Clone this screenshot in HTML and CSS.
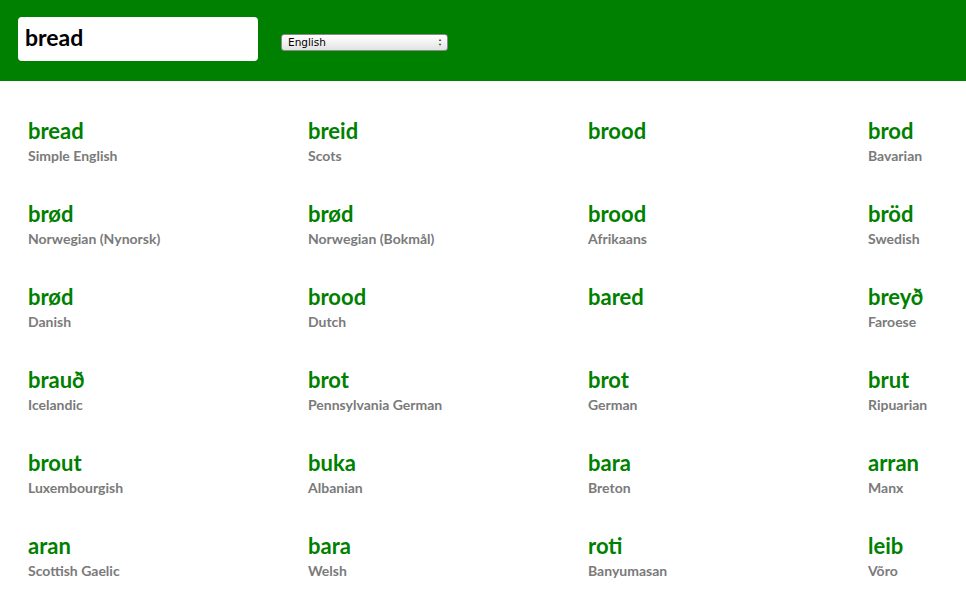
FILE: index.html
```html
<!DOCTYPE html>
<html>
<head>
<meta charset="utf-8">
<title>bread</title>
<link rel="stylesheet" href="styles.css">
</head>
<body>
<header class="topbar">
  <input class="search" type="text" value="bread">
  <div class="select-wrap">
    <select class="lang-select">
      <option>English</option>
    </select>
    <span class="arrows"><span>&#9650;</span><span>&#9660;</span></span>
  </div>
</header>
<main class="results">
  <div class="item"><div class="word">bread</div><div class="lang">Simple English</div></div>
  <div class="item"><div class="word">breid</div><div class="lang">Scots</div></div>
  <div class="item"><div class="word">brood</div><div class="lang"></div></div>
  <div class="item"><div class="word">brod</div><div class="lang">Bavarian</div></div>

  <div class="item"><div class="word">brød</div><div class="lang">Norwegian (Nynorsk)</div></div>
  <div class="item"><div class="word">brød</div><div class="lang">Norwegian (Bokmål)</div></div>
  <div class="item"><div class="word">brood</div><div class="lang">Afrikaans</div></div>
  <div class="item"><div class="word">bröd</div><div class="lang">Swedish</div></div>

  <div class="item"><div class="word">brød</div><div class="lang">Danish</div></div>
  <div class="item"><div class="word">brood</div><div class="lang">Dutch</div></div>
  <div class="item"><div class="word">bared</div><div class="lang"></div></div>
  <div class="item"><div class="word">breyð</div><div class="lang">Faroese</div></div>

  <div class="item"><div class="word">brauð</div><div class="lang">Icelandic</div></div>
  <div class="item"><div class="word">brot</div><div class="lang">Pennsylvania German</div></div>
  <div class="item"><div class="word">brot</div><div class="lang">German</div></div>
  <div class="item"><div class="word">brut</div><div class="lang">Ripuarian</div></div>

  <div class="item"><div class="word">brout</div><div class="lang">Luxembourgish</div></div>
  <div class="item"><div class="word">buka</div><div class="lang">Albanian</div></div>
  <div class="item"><div class="word">bara</div><div class="lang">Breton</div></div>
  <div class="item"><div class="word">arran</div><div class="lang">Manx</div></div>

  <div class="item"><div class="word">aran</div><div class="lang">Scottish Gaelic</div></div>
  <div class="item"><div class="word">bara</div><div class="lang">Welsh</div></div>
  <div class="item"><div class="word">roti</div><div class="lang">Banyumasan</div></div>
  <div class="item"><div class="word">leib</div><div class="lang">Võro</div></div>
</main>
</body>
</html>
```
FILE: styles.css
```css
html, body {
  margin: 0;
  padding: 0;
  background: #fff;
  overflow: hidden;
  font-family: "Lato", "Open Sans", sans-serif;
}
.topbar {
  height: 81px;
  background: #008000;
  display: flex;
  align-items: flex-start;
  padding: 17px 0 0 18px;
  box-sizing: border-box;
}
.search {
  width: 240px;
  height: 44px;
  box-sizing: border-box;
  border: none;
  border-radius: 4px;
  background: #fff;
  padding: 0 7px 4px 7px;
  font-family: "Lato", sans-serif;
  font-weight: 700;
  font-size: 23px;
  color: #000;
  outline: none;
}
.select-wrap {
  position: relative;
  margin: 17px 0 0 23px;
  width: 167px;
  height: 17px;
}
.lang-select {
  appearance: none;
  -webkit-appearance: none;
  display: block;
  width: 167px;
  height: 17px;
  box-sizing: border-box;
  font-family: "DejaVu Sans", sans-serif;
  font-size: 10.5px;
  line-height: 15px;
  border: 1px solid #8a8a8a;
  border-radius: 3px;
  background: linear-gradient(#ffffff, #f2f2f2 50%, #e2e2e2);
  padding: 0 0 0 6px;
  color: #000;
}
.arrows {
  position: absolute;
  right: 6px;
  top: 3px;
  display: flex;
  flex-direction: column;
  font-size: 4px;
  line-height: 5px;
  color: #444;
  pointer-events: none;
}
.results {
  display: grid;
  grid-template-columns: 280px 280px 280px 1fr;
  grid-auto-rows: 83px;
  padding: 36px 0 0 28px;
}
.word {
  font-size: 22px;
  font-weight: 700;
  line-height: 27px;
  color: #008000;
}
.lang {
  margin-top: 3px;
  font-size: 14px;
  font-weight: 700;
  line-height: 18px;
  color: #7a7a7a;
}
```
